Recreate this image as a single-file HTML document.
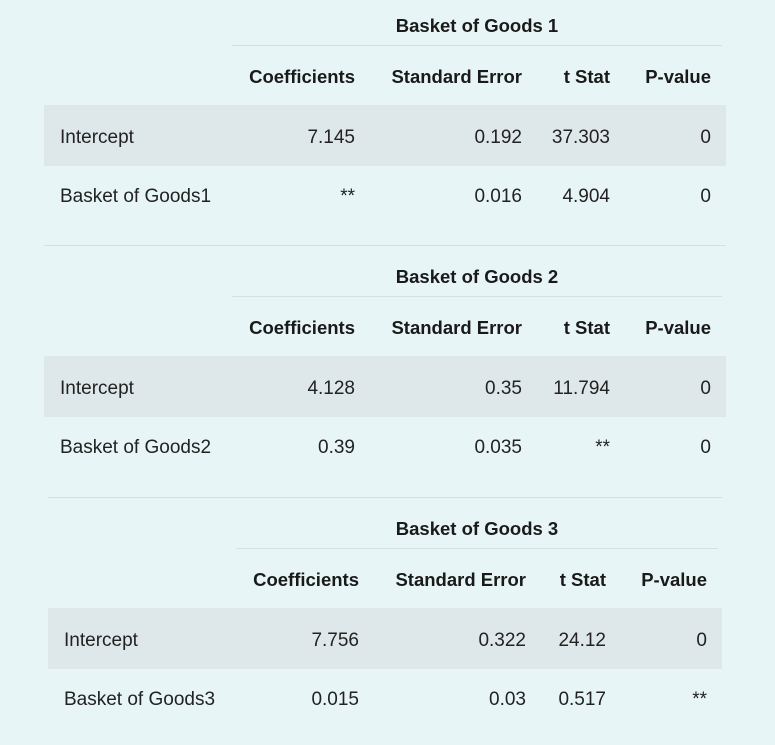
<!DOCTYPE html>
<html><head><meta charset="utf-8"><style>
*{margin:0;padding:0;box-sizing:border-box}
body{width:775px;height:745px;background:#e8f5f7;position:relative;overflow:hidden;font-family:"Liberation Sans",sans-serif;color:#222;font-size:19px}
.a{position:absolute;line-height:22px;white-space:nowrap}
.r{text-align:right}
.b{font-weight:bold;color:#1a1a1a;font-size:18.5px}
.line{position:absolute;height:1px;background:#d8dfe2}
.stripe{position:absolute;background:#dee8ea}
</style></head><body>
<!-- table 1 -->
<div class="a b" style="left:232px;width:490px;top:15px;text-align:center">Basket of Goods 1</div>
<div class="line" style="left:232px;width:490px;top:45px"></div>
<div class="a b r" style="right:420px;top:66px">Coefficients</div>
<div class="a b r" style="right:253px;top:66px">Standard Error</div>
<div class="a b r" style="right:165px;top:66px">t Stat</div>
<div class="a b r" style="right:64px;top:66px">P-value</div>
<div class="stripe" style="left:44px;width:682px;top:105px;height:61px"></div>
<div class="a" style="left:60px;top:127px">Intercept</div>
<div class="a r" style="right:420px;top:127px">7.145</div>
<div class="a r" style="right:253px;top:127px">0.192</div>
<div class="a r" style="right:165px;top:127px">37.303</div>
<div class="a r" style="right:64px;top:127px">0</div>
<div class="a" style="left:60px;top:186px">Basket of Goods1</div>
<div class="a r" style="right:420px;top:186px">**</div>
<div class="a r" style="right:253px;top:186px">0.016</div>
<div class="a r" style="right:165px;top:186px">4.904</div>
<div class="a r" style="right:64px;top:186px">0</div>
<div class="line" style="left:44px;width:682px;top:245px"></div>
<!-- table 2 -->
<div class="a b" style="left:232px;width:490px;top:266px;text-align:center">Basket of Goods 2</div>
<div class="line" style="left:232px;width:490px;top:296px"></div>
<div class="a b r" style="right:420px;top:317px">Coefficients</div>
<div class="a b r" style="right:253px;top:317px">Standard Error</div>
<div class="a b r" style="right:165px;top:317px">t Stat</div>
<div class="a b r" style="right:64px;top:317px">P-value</div>
<div class="stripe" style="left:44px;width:682px;top:356px;height:61px"></div>
<div class="a" style="left:60px;top:378px">Intercept</div>
<div class="a r" style="right:420px;top:378px">4.128</div>
<div class="a r" style="right:253px;top:378px">0.35</div>
<div class="a r" style="right:165px;top:378px">11.794</div>
<div class="a r" style="right:64px;top:378px">0</div>
<div class="a" style="left:60px;top:437px">Basket of Goods2</div>
<div class="a r" style="right:420px;top:437px">0.39</div>
<div class="a r" style="right:253px;top:437px">0.035</div>
<div class="a r" style="right:165px;top:437px">**</div>
<div class="a r" style="right:64px;top:437px">0</div>
<div class="line" style="left:48px;width:674px;top:497px"></div>
<!-- table 3 -->
<div class="a b" style="left:236px;width:482px;top:518px;text-align:center">Basket of Goods 3</div>
<div class="line" style="left:236px;width:482px;top:548px"></div>
<div class="a b r" style="right:416px;top:569px">Coefficients</div>
<div class="a b r" style="right:249px;top:569px">Standard Error</div>
<div class="a b r" style="right:169px;top:569px">t Stat</div>
<div class="a b r" style="right:68px;top:569px">P-value</div>
<div class="stripe" style="left:48px;width:674px;top:608px;height:61px"></div>
<div class="a" style="left:64px;top:630px">Intercept</div>
<div class="a r" style="right:416px;top:630px">7.756</div>
<div class="a r" style="right:249px;top:630px">0.322</div>
<div class="a r" style="right:169px;top:630px">24.12</div>
<div class="a r" style="right:68px;top:630px">0</div>
<div class="a" style="left:64px;top:689px">Basket of Goods3</div>
<div class="a r" style="right:416px;top:689px">0.015</div>
<div class="a r" style="right:249px;top:689px">0.03</div>
<div class="a r" style="right:169px;top:689px">0.517</div>
<div class="a r" style="right:68px;top:689px">**</div>
</body></html>
